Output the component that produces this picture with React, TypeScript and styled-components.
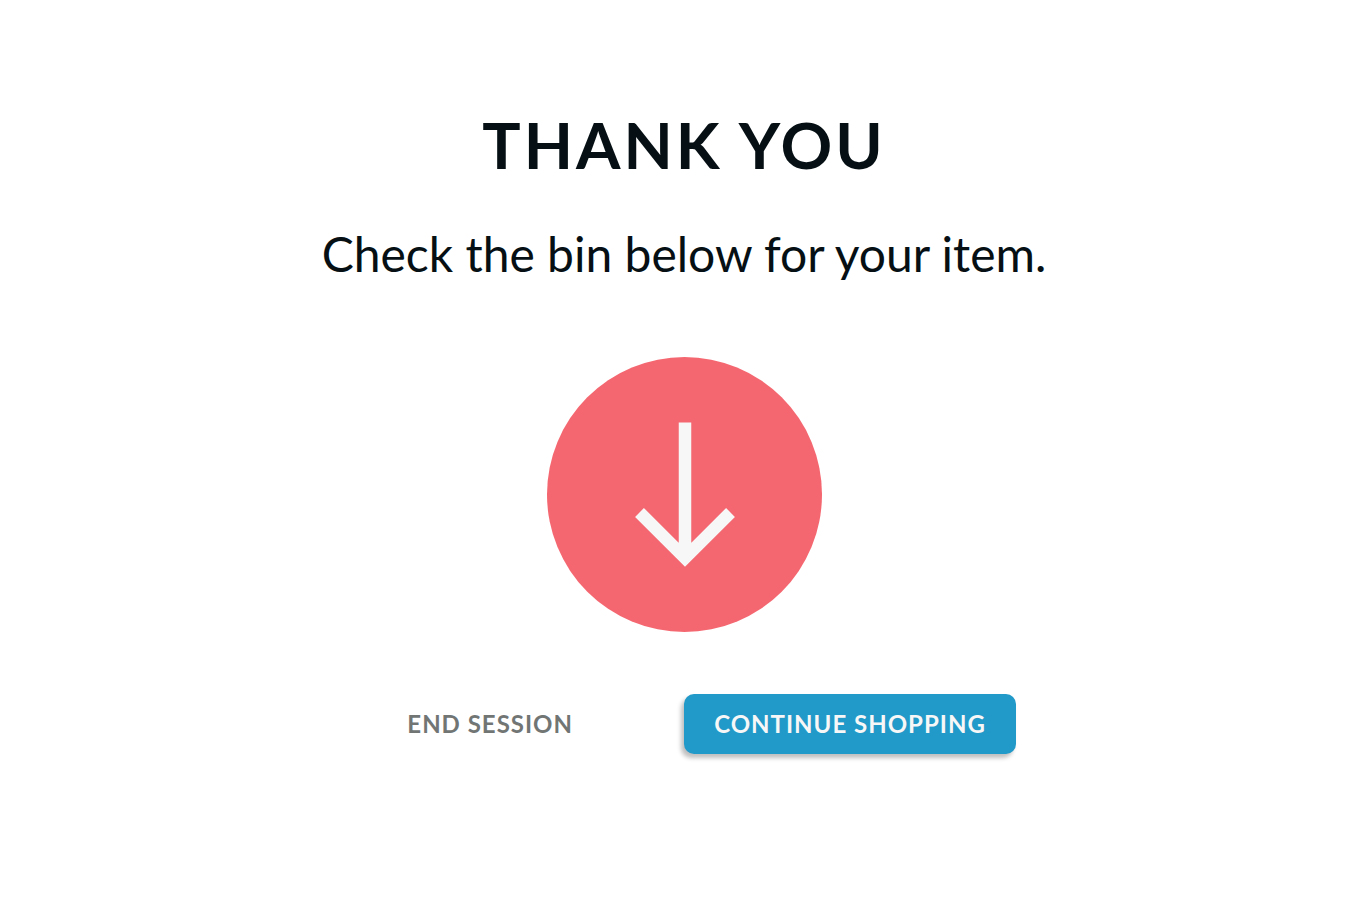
import React from "react";
import styled, { createGlobalStyle } from "styled-components";

const GlobalStyle = createGlobalStyle`
  * { box-sizing: border-box; }
  body {
    margin: 0;
    background: #ffffff;
    color: #061014;
    font-family: Lato, "Liberation Sans", sans-serif;
  }
`;

const Page = styled.main`
  display: flex;
  flex-direction: column;
  align-items: center;
  min-height: 100vh;
  padding: 104px 24px 48px;
  text-align: center;
`;

const Title = styled.h1`
  margin: 0;
  font-size: 64px;
  line-height: 82px;
  font-weight: 700;
  letter-spacing: 3px;
`;

const Message = styled.p`
  margin: 38px 0 0;
  font-size: 48px;
  line-height: 60px;
`;

const ArrowBadge = styled.svg`
  display: block;
  width: 275px;
  height: 275px;
  margin-top: 73px;
`;

const Actions = styled.div`
  display: grid;
  grid-template-columns: 1fr 1fr;
  width: 100%;
  margin-top: 62px;
`;

const Button = styled.button`
  height: 60px;
  padding: 0 29px 2px;
  border: 0;
  border-radius: 10px;
  font: inherit;
  font-size: 24px;
  font-weight: 700;
  letter-spacing: 1px;
  white-space: nowrap;
  cursor: pointer;
`;

const QuietButton = styled(Button)`
  justify-self: end;
  margin-right: 82px;
  color: #717675;
  background: transparent;
`;

const PrimaryButton = styled(Button)`
  justify-self: start;
  min-width: 332px;
  color: #f7f7f7;
  background: #2199c9;
  box-shadow: -3px 4px 4px rgba(0, 0, 0, 0.25);
`;

export default function App() {
  return (
    <>
      <GlobalStyle />
      <Page>
        <Title>THANK YOU</Title>
        <Message>Check the bin below for your item.</Message>
        <ArrowBadge viewBox="0 0 275 275" aria-hidden="true">
          <circle cx="137.5" cy="137.5" r="137.5" fill="#f56770" />
          <path
            d="M138 65.5V202M92.5 155.5L138 201L183.5 155.5"
            fill="none"
            stroke="#f7f7f7"
            strokeWidth="12.5"
          />
        </ArrowBadge>
        <Actions>
          <QuietButton type="button">END SESSION</QuietButton>
          <PrimaryButton type="button">CONTINUE SHOPPING</PrimaryButton>
        </Actions>
      </Page>
    </>
  );
}
